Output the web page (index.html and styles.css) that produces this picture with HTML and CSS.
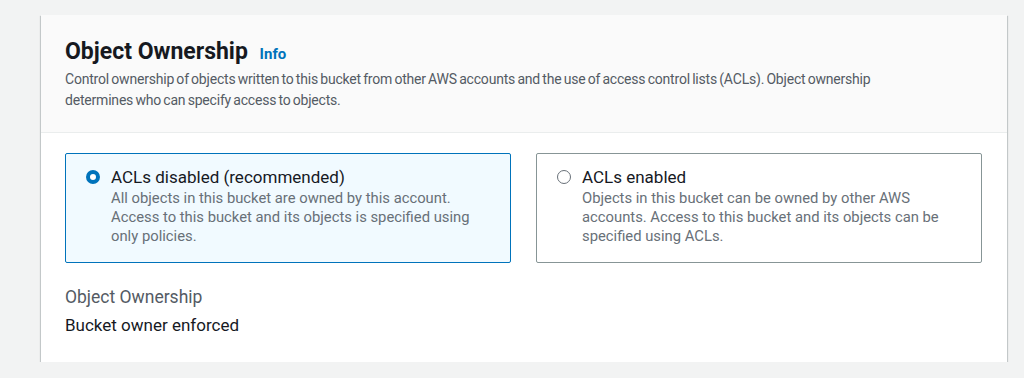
FILE: index.html
```html
<!DOCTYPE html>
<html lang="en">
<head>
    <meta charset="UTF-8">
    <title>Object Ownership</title>
    <link rel="stylesheet" href="styles.css">
</head>
<body>
    <div class="container">
        <div class="container-header">
            <h2>Object Ownership <a href="#" class="info-link">Info</a></h2>
            <p class="description">Control ownership of objects written to this bucket from other AWS accounts and the use of access control lists (ACLs). Object ownership determines who can specify access to objects.</p>
        </div>
        <div class="container-body">
            <div class="tiles">
                <label class="tile selected">
                    <span class="radio checked"></span>
                    <span class="tile-text">
                        <span class="tile-label">ACLs disabled (recommended)</span>
                        <span class="tile-desc">All objects in this bucket are owned by this account. Access to this bucket and its objects is specified using only policies.</span>
                    </span>
                </label>
                <label class="tile">
                    <span class="radio"></span>
                    <span class="tile-text">
                        <span class="tile-label">ACLs enabled</span>
                        <span class="tile-desc">Objects in this bucket can be owned by other AWS accounts. Access to this bucket and its objects can be specified using ACLs.</span>
                    </span>
                </label>
            </div>
            <div class="field">
                <div class="field-label">Object Ownership</div>
                <div class="field-value">Bucket owner enforced</div>
            </div>
        </div>
    </div>
</body>
</html>
```

FILE: styles.css
```css
body {
    margin: 0;
    padding: 15px 17px 0 41px;
    background-color: #f2f3f3;
    font-family: Roboto, Arial, sans-serif;
    color: #16191f;
}
.container {
    background: #fff;
    box-shadow: 0 1px 1px 0 rgba(0, 28, 36, 0.3), 1px 1px 1px 0 rgba(0, 28, 36, 0.15), -1px 1px 1px 0 rgba(0, 28, 36, 0.15);
}
.container-header {
    background-color: #fafafa;
    border-bottom: 1px solid #eaeded;
    padding: 22px 24px 21px;
}
h2 {
    margin: 0;
    font-size: 23px;
    line-height: 30px;
    font-weight: 700;
}
.info-link {
    margin-left: 6px;
    font-size: 15px;
    color: #0073bb;
    text-decoration: none;
    font-weight: 700;
}
.description {
    margin: 0;
    max-width: 815px;
    font-size: 14px;
    line-height: 21px;
    letter-spacing: -0.2px;
    word-spacing: -1px;
    color: #545b64;
}
.container-body {
    padding: 20px 25px 26px 24px;
}
.tiles {
    display: grid;
    grid-template-columns: 1fr 1fr;
    gap: 25px;
}
.tile {
    display: flex;
    gap: 11px;
    padding: 12px 20px 15px;
    border: 1px solid #879596;
    border-radius: 2px;
    min-height: 81px;
}
.tile.selected {
    background-color: #f1faff;
    border-color: #0073bb;
}
.radio {
    flex: none;
    width: 12px;
    height: 12px;
    margin-top: 4px;
    border: 1px solid #687078;
    border-radius: 50%;
    background: #fff;
}
.radio.checked {
    width: 6px;
    height: 6px;
    border: 4px solid #0073bb;
}
.tile-text {
    display: flex;
    flex-direction: column;
    max-width: 365px;
}
.tile-label {
    font-size: 17px;
    line-height: 22px;
}
.tile-desc {
    font-size: 14.8px;
    line-height: 19px;
    color: #687078;
    margin-top: 1px;
}
.field {
    margin-top: 23px;
}
.field-label {
    font-size: 17.5px;
    line-height: 22px;
    color: #545b64;
}
.field-value {
    margin-top: 6px;
    font-size: 17px;
    line-height: 22px;
}
```
